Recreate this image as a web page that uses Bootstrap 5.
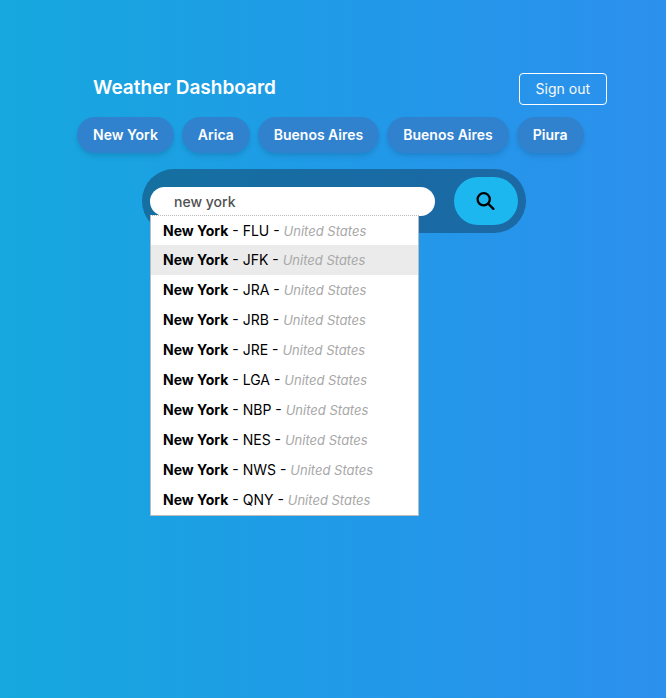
<!DOCTYPE html>
<html lang="en">
<head>
<meta charset="utf-8">
<meta name="viewport" content="width=device-width, initial-scale=1">
<title>Weather Dashboard</title>
<link href="https://cdn.jsdelivr.net/npm/bootstrap@5.3.0/dist/css/bootstrap.min.css" rel="stylesheet">
<style>
body{font-family:Inter,sans-serif;background:linear-gradient(to right,#16a8de,#2199e8 54%,#2c90ed)}
main{padding-left:2px}
.page-top{padding:73px 59px 0 93px}
.title{font-size:19px;line-height:30px;font-weight:600}
.signout{font-size:14px;line-height:20px;padding:5px 16px;border-color:#fff;border-radius:4px}
.cities{padding:12px 75px 0}
.city{font-size:14px;line-height:20px;font-weight:600;padding:8px 16px;border:0;background:#3182ce;color:#fff;box-shadow:0 4px 6px -1px rgba(0,0,0,.1),0 2px 4px -1px rgba(0,0,0,.06)}
.city:hover{background:#2b6cb0;color:#fff}
.search{width:384px;padding:8px;margin-top:16px;background:rgba(16,61,95,.5)}
.field{width:285px}
.query{font-size:14px;line-height:20px;height:29px;padding:0 24px;font-weight:500;color:#505050;border:0}
.go{width:64px;height:48px;background:#1cb7ee;border:0}
.go:hover{background:#16a6da}
.suggestions{top:28px;left:0;width:269px;border:1px solid #bbb;border-top:1px dotted #bbb;background:#fff}
.option{font-size:14px;line-height:20px;padding:5px 12px;border:0;background:#fff;color:#000}
.option:first-child{padding-bottom:4px}
.option:hover,.option.current{background:#ebebeb}
.option em{font-size:13px;color:#a8a8a8}
</style>
</head>
<body class="min-vh-100">
<header class="page-top d-flex justify-content-between align-items-start">
<h1 class="title text-white m-0">Weather Dashboard</h1>
<button type="button" class="btn btn-outline-light signout">Sign out</button>
</header>
<main>
<nav class="cities d-flex gap-2 text-nowrap" aria-label="Saved cities">
<button type="button" class="btn rounded-pill city">New York</button>
<button type="button" class="btn rounded-pill city">Arica</button>
<button type="button" class="btn rounded-pill city">Buenos Aires</button>
<button type="button" class="btn rounded-pill city">Buenos Aires</button>
<button type="button" class="btn rounded-pill city">Piura</button>
</nav>
<form class="search d-flex justify-content-between align-items-center rounded-pill mx-auto" role="search">
<div class="field position-relative">
<label class="visually-hidden" for="city-query">Search city</label>
<input class="form-control rounded-pill query" id="city-query" type="text" value="new york" autocomplete="off">
<div class="suggestions position-absolute" role="listbox" aria-label="Suggestions">
<button type="button" role="option" class="option d-block w-100 text-start"><b>New York</b> - FLU - <em>United States</em></button>
<button type="button" role="option" aria-selected="true" class="option current d-block w-100 text-start"><b>New York</b> - JFK - <em>United States</em></button>
<button type="button" role="option" class="option d-block w-100 text-start"><b>New York</b> - JRA - <em>United States</em></button>
<button type="button" role="option" class="option d-block w-100 text-start"><b>New York</b> - JRB - <em>United States</em></button>
<button type="button" role="option" class="option d-block w-100 text-start"><b>New York</b> - JRE - <em>United States</em></button>
<button type="button" role="option" class="option d-block w-100 text-start"><b>New York</b> - LGA - <em>United States</em></button>
<button type="button" role="option" class="option d-block w-100 text-start"><b>New York</b> - NBP - <em>United States</em></button>
<button type="button" role="option" class="option d-block w-100 text-start"><b>New York</b> - NES - <em>United States</em></button>
<button type="button" role="option" class="option d-block w-100 text-start"><b>New York</b> - NWS - <em>United States</em></button>
<button type="button" role="option" class="option d-block w-100 text-start"><b>New York</b> - QNY - <em>United States</em></button>
</div>
</div>
<button type="submit" class="btn rounded-pill go d-flex align-items-center justify-content-center p-0" aria-label="Search">
<svg width="20" height="20" viewBox="0 0 20 20" fill="none" stroke="#000" stroke-width="2.3" stroke-linecap="round" aria-hidden="true"><circle cx="7.7" cy="8.3" r="6.1"/><path d="M12.2 12.8l5.2 5.1"/></svg>
</button>
</form>
</main>
<script src="https://cdn.jsdelivr.net/npm/bootstrap@5.3.0/dist/js/bootstrap.bundle.min.js"></script>
</body>
</html>
